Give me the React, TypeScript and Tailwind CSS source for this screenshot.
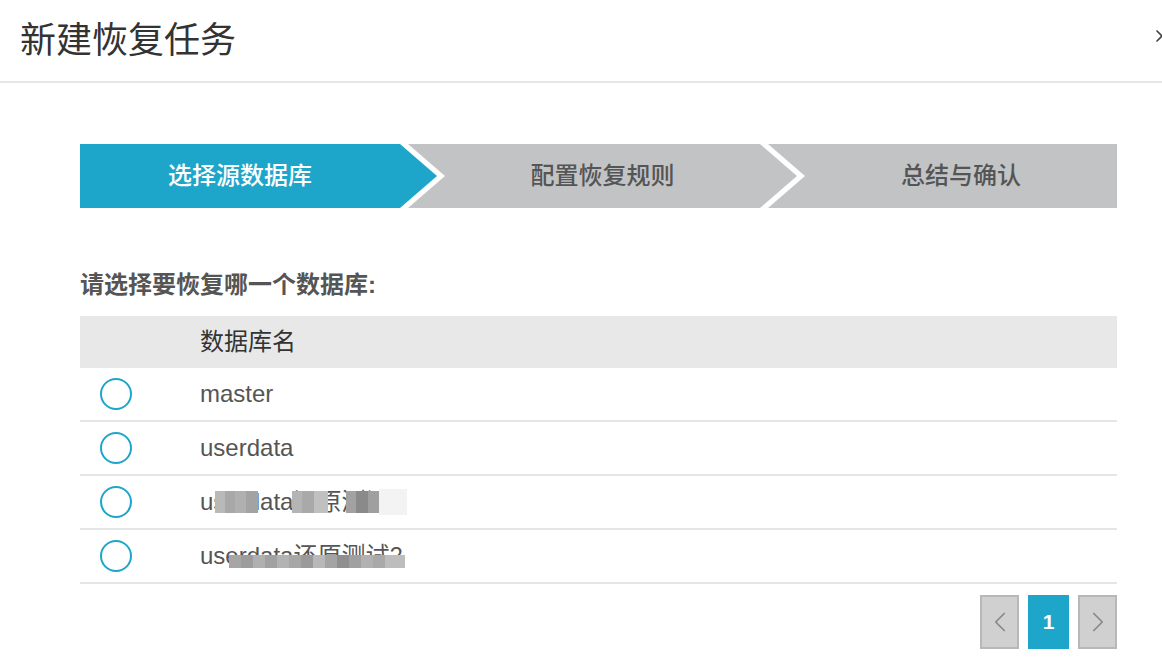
import { ChevronLeft, ChevronRight, X } from "lucide-react";

const font = { fontFamily: '"Liberation Sans", "Noto Sans CJK SC", sans-serif' };

type Cell = [number, number, number, number, string];

// pixelated mosaic covering part of a name
function Mosaic({ cells }: { cells: Cell[] }) {
  return (
    <>
      {cells.map(([x, y, w, h, c], i) => (
        <span
          key={i}
          className="absolute"
          style={{ left: x, top: y, width: w, height: h, background: c }}
        />
      ))}
    </>
  );
}

const mosaicA: Cell[] = [
  [15, 7, 10, 22, "#b9b9b9"],
  [25, 7, 10, 22, "#a8a8a8"],
  [35, 7, 11, 22, "#b0b0b0"],
  [46, 7, 12, 22, "#a3a3a3"],
  [92, 7, 10, 22, "#b4b4b4"],
  [102, 7, 12, 22, "#a9a9a9"],
  [114, 7, 14, 22, "#c0c0c0"],
  [146, 7, 10, 22, "#a2a2a2"],
  [156, 7, 12, 22, "#8a8a8a"],
  [168, 7, 11, 22, "#9f9f9f"],
  [179, 5, 28, 26, "#f3f3f3"],
];

const mosaicB: Cell[] = [
  [29, 17, 12, 13, "#a6a6a6"],
  [41, 17, 12, 13, "#9d9d9d"],
  [53, 17, 12, 13, "#b0b0b0"],
  [65, 17, 12, 13, "#a1a1a1"],
  [77, 17, 12, 13, "#b3b3b3"],
  [89, 17, 12, 13, "#a7a7a7"],
  [101, 17, 12, 13, "#9a9a9a"],
  [113, 17, 12, 13, "#b8b8b8"],
  [125, 17, 12, 13, "#a4a4a4"],
  [137, 17, 12, 13, "#8f8f8f"],
  [149, 17, 12, 13, "#a0a0a0"],
  [161, 17, 12, 13, "#b1b1b1"],
  [173, 17, 12, 13, "#a9a9a9"],
  [185, 17, 20, 13, "#bdbdbd"],
];

const rows: { name: string; mosaic?: Cell[] }[] = [
  { name: "master" },
  { name: "userdata" },
  { name: "userdata还原测试1", mosaic: mosaicA },
  { name: "userdata还原测试2", mosaic: mosaicB },
];

export default function App() {
  return (
    <div className="h-[660px] w-[1162px] overflow-hidden bg-white" style={font}>
      <div className="relative flex h-[83px] items-center border-b-2 border-[#e6e6e6] pl-[20px]">
        <h1 className="text-[36px] leading-none text-[#333]">新建恢复任务</h1>
        <X className="absolute right-[-10px] top-[26px] h-[20px] w-[20px] text-[#444]" strokeWidth={2} />
      </div>

      <div className="px-[80px] pr-[45px] pt-[61px]">
        <div className="flex h-[64px] text-[24px] font-medium">
          <div
            className="flex w-[357px] shrink-0 items-center justify-center bg-[#1ea6ca] pr-[37px] text-white"
            style={{ clipPath: "polygon(0 0, calc(100% - 37px) 0, 100% 50%, calc(100% - 37px) 100%, 0 100%)" }}
          >
            选择源数据库
          </div>
          <div
            className="ml-[-29px] flex w-[389px] shrink-0 items-center justify-center bg-[#c2c3c5] px-[37px] text-[#555]"
            style={{ clipPath: "polygon(0 0, calc(100% - 37px) 0, 100% 50%, calc(100% - 37px) 100%, 0 100%, 37px 50%)" }}
          >
            配置恢复规则
          </div>
          <div
            className="ml-[-29px] flex flex-1 items-center justify-center bg-[#c2c3c5] pl-[37px] text-[#555]"
            style={{ clipPath: "polygon(0 0, 100% 0, 100% 100%, 0 100%, 37px 50%)" }}
          >
            总结与确认
          </div>
        </div>

        <p className="mt-[59px] text-[24px] font-semibold leading-[36px] text-[#555]">请选择要恢复哪一个数据库:</p>

        <div className="mt-[13px]">
          <div className="flex h-[52px] items-center bg-[#e8e8e8] pl-[120px] text-[24px] text-[#333]">数据库名</div>
          {rows.map((r) => (
            <div key={r.name} className="flex h-[54px] items-center border-b-2 border-[#e3e6e9]">
              <span className="ml-[20px] h-[32px] w-[32px] rounded-full border-2 border-[#1ea6ca]" />
              <span className="relative ml-[68px] text-[24px] leading-[36px] text-[#555]">
                {r.name}
                {r.mosaic && <Mosaic cells={r.mosaic} />}
              </span>
            </div>
          ))}
        </div>

        <div className="mt-[11px] flex justify-end gap-[9px]">
          <button className="flex h-[54px] w-[39px] items-center justify-center border-2 border-[#b8b8b8] bg-[#d0d0d0] text-[#888]">
            <ChevronLeft className="h-[34px] w-[34px]" strokeWidth={1.2} />
          </button>
          <button className="flex h-[54px] w-[41px] items-center justify-center bg-[#1ea6ca] text-[21px] font-bold text-white">
            1
          </button>
          <button className="flex h-[54px] w-[39px] items-center justify-center border-2 border-[#b8b8b8] bg-[#d0d0d0] text-[#888]">
            <ChevronRight className="h-[34px] w-[34px]" strokeWidth={1.2} />
          </button>
        </div>
      </div>
    </div>
  );
}
